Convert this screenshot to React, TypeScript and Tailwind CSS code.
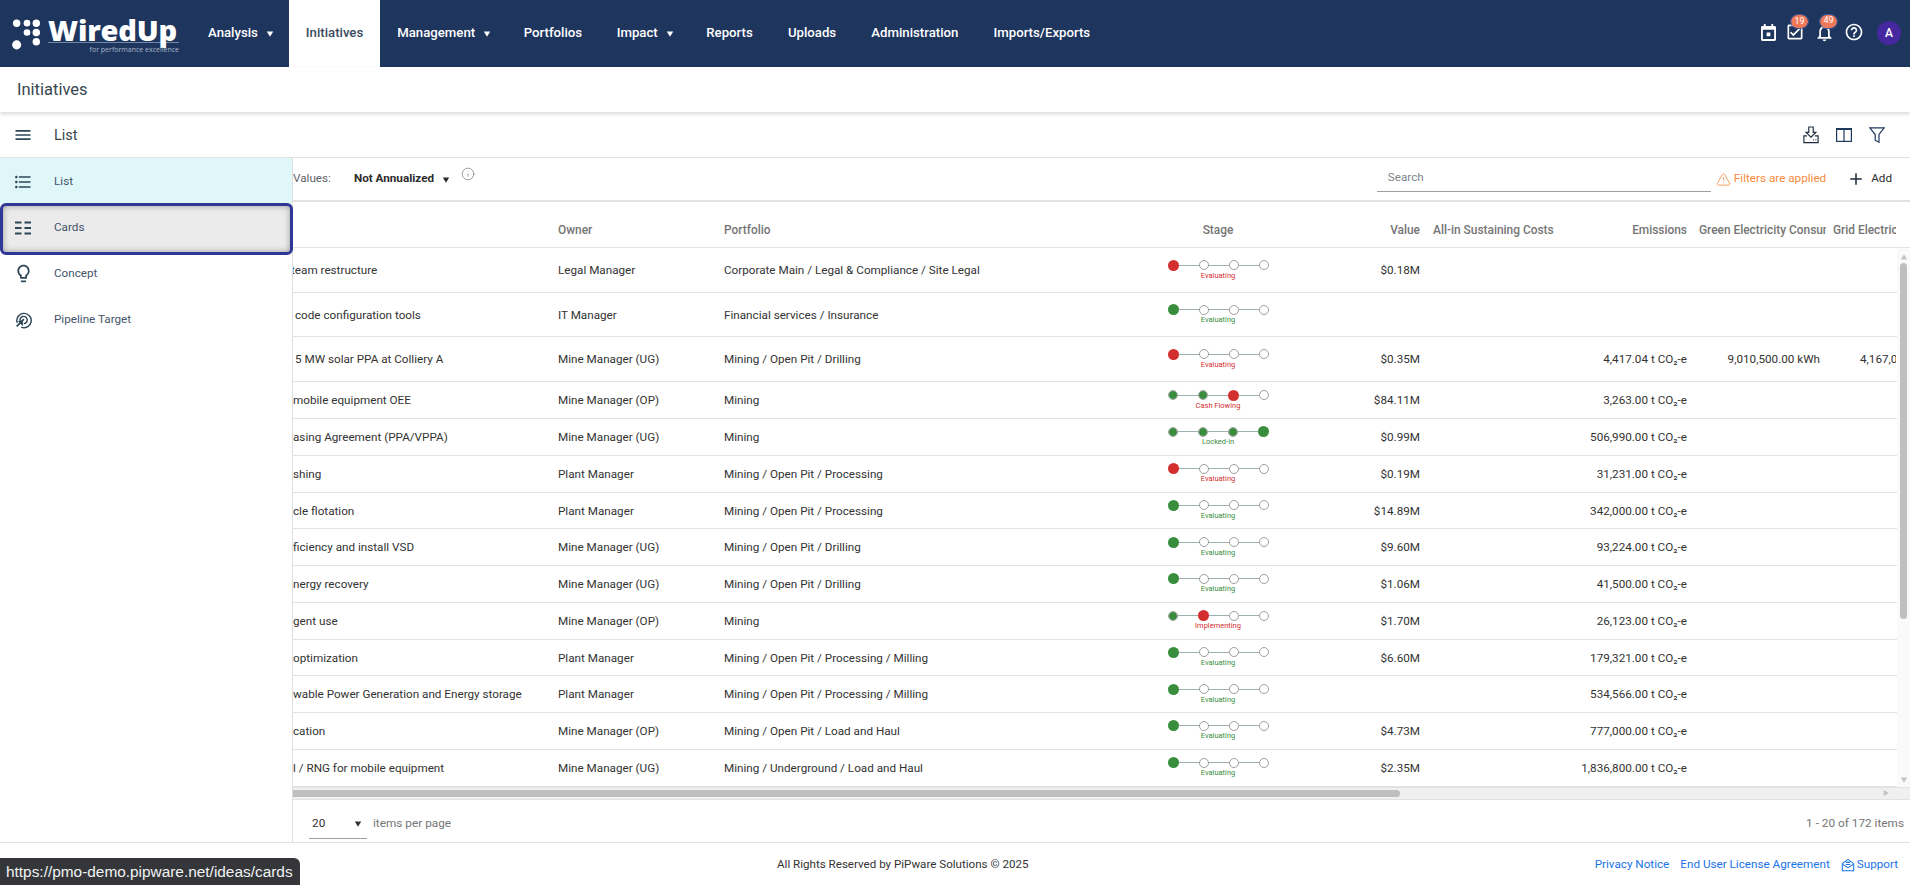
import {
  MdMenu,
  MdFormatListBulleted,
  MdOutlineLightbulb,
  MdOutlineNotifications,
  MdHelpOutline,
  MdOutlineAssignmentTurnedIn,
} from 'react-icons/md'
import { Info, Plus, TriangleAlert } from 'lucide-react'

type StepState = 'done' | 'red' | 'green' | 'empty'

type Row = {
  name: string
  nameClass: string
  owner: string
  portfolio: string
  steps: StepState[]
  stage: string
  value?: string
  emissions?: string
  green?: string
  grid?: string
  height: string
}

const drilling = 'Mining / Open Pit / Drilling'
const processing = 'Mining / Open Pit / Processing'
const milling = 'Mining / Open Pit / Processing / Milling'
const early: StepState[] = ['green', 'empty', 'empty', 'empty']
const earlyRed: StepState[] = ['red', 'empty', 'empty', 'empty']

const rows: Row[] = [
  { name: 'team restructure', nameClass: '-ml-[2px]', owner: 'Legal Manager', portfolio: 'Corporate Main / Legal & Compliance / Site Legal', steps: earlyRed, stage: 'Evaluating', value: '$0.18M', height: 'h-[45px]' },
  { name: 'code configuration tools', nameClass: 'ml-[2px]', owner: 'IT Manager', portfolio: 'Financial services / Insurance', steps: early, stage: 'Evaluating', height: 'h-[44px]' },
  { name: '5 MW solar PPA at Colliery A', nameClass: 'ml-[2px]', owner: 'Mine Manager (UG)', portfolio: drilling, steps: earlyRed, stage: 'Evaluating', value: '$0.35M', emissions: '4,417.04 t CO₂-e', green: '9,010,500.00 kWh', grid: '4,167,000.00 kWh', height: 'h-[45px]' },
  { name: 'mobile equipment OEE', nameClass: 'ml-0', owner: 'Mine Manager (OP)', portfolio: 'Mining', steps: ['done', 'done', 'red', 'empty'], stage: 'Cash Flowing', value: '$84.11M', emissions: '3,263.00 t CO₂-e', height: 'h-[37px]' },
  { name: 'asing Agreement (PPA/VPPA)', nameClass: 'ml-0', owner: 'Mine Manager (UG)', portfolio: 'Mining', steps: ['done', 'done', 'done', 'green'], stage: 'Locked-in', value: '$0.99M', emissions: '506,990.00 t CO₂-e', height: 'h-[36.75px]' },
  { name: 'shing', nameClass: 'ml-0', owner: 'Plant Manager', portfolio: processing, steps: earlyRed, stage: 'Evaluating', value: '$0.19M', emissions: '31,231.00 t CO₂-e', height: 'h-[36.75px]' },
  { name: 'cle flotation', nameClass: 'ml-0', owner: 'Plant Manager', portfolio: processing, steps: early, stage: 'Evaluating', value: '$14.89M', emissions: '342,000.00 t CO₂-e', height: 'h-[36.75px]' },
  { name: 'ficiency and install VSD', nameClass: 'ml-0', owner: 'Mine Manager (UG)', portfolio: drilling, steps: early, stage: 'Evaluating', value: '$9.60M', emissions: '93,224.00 t CO₂-e', height: 'h-[36.75px]' },
  { name: 'nergy recovery', nameClass: 'ml-0', owner: 'Mine Manager (UG)', portfolio: drilling, steps: early, stage: 'Evaluating', value: '$1.06M', emissions: '41,500.00 t CO₂-e', height: 'h-[36.75px]' },
  { name: 'gent use', nameClass: 'ml-0', owner: 'Mine Manager (OP)', portfolio: 'Mining', steps: ['done', 'red', 'empty', 'empty'], stage: 'Implementing', value: '$1.70M', emissions: '26,123.00 t CO₂-e', height: 'h-[36.75px]' },
  { name: 'optimization', nameClass: 'ml-0', owner: 'Plant Manager', portfolio: milling, steps: early, stage: 'Evaluating', value: '$6.60M', emissions: '179,321.00 t CO₂-e', height: 'h-[36.75px]' },
  { name: 'wable Power Generation and Energy storage', nameClass: 'ml-0', owner: 'Plant Manager', portfolio: milling, steps: early, stage: 'Evaluating', emissions: '534,566.00 t CO₂-e', height: 'h-[36.75px]' },
  { name: 'cation', nameClass: 'ml-0', owner: 'Mine Manager (OP)', portfolio: 'Mining / Open Pit / Load and Haul', steps: early, stage: 'Evaluating', value: '$4.73M', emissions: '777,000.00 t CO₂-e', height: 'h-[36.75px]' },
  { name: 'l / RNG for mobile equipment', nameClass: 'ml-0', owner: 'Mine Manager (UG)', portfolio: 'Mining / Underground / Load and Haul', steps: early, stage: 'Evaluating', value: '$2.35M', emissions: '1,836,800.00 t CO₂-e', height: 'h-[36.75px]' },
]

const navItems = [
  { label: 'Analysis', caret: true },
  { label: 'Initiatives', active: true },
  { label: 'Management', caret: true },
  { label: 'Portfolios' },
  { label: 'Impact', caret: true },
  { label: 'Reports' },
  { label: 'Uploads' },
  { label: 'Administration' },
  { label: 'Imports/Exports' },
]

const gridCols = 'grid grid-cols-[265px_166px_394px_200px_107px_155px_112px_134px_70px]'

function Caret({ className }: { className: string }) {
  return (
    <svg viewBox="0 0 10 10" className={className} fill="currentColor">
      <path d="M1 2h8L5 8.5z" />
    </svg>
  )
}

function Logo() {
  const dots = [
    [4, 5, 3.6], [14, 5, 3.2], [23, 5, 3.6],
    [14, 14, 3.2], [23, 14, 3.6],
    [23, 23, 3.6], [4, 26, 4.4],
  ]
  return (
    <div className="flex w-[191px] shrink-0 items-start pl-3 pt-[17px]">
      <svg width="30" height="32" viewBox="0 0 28 31" className="mt-[1px] shrink-0 fill-white">
        {dots.map(([cx, cy, r], i) => (
          <circle key={i} cx={cx} cy={cy} r={r} />
        ))}
      </svg>
      <div className="ml-[6px] w-[131px]">
        <div className="h-[25px] font-['Open_Sans',sans-serif] text-[29px] leading-[25px] font-extrabold tracking-[-0.2px] text-white">
          WiredUp
        </div>
        <div className="h-px bg-[#7288a8]" />
        <div className="mt-[2px] text-right font-['Open_Sans',sans-serif] text-[7px] leading-[10px] text-[#a9b5c8]">
          for performance excellence
        </div>
      </div>
    </div>
  )
}

function CalendarIcon() {
  return (
    <svg viewBox="0 0 16 18" className="mr-[9px] h-[17px] w-[15px] fill-white">
      <path d="M3 0h2v2h6V0h2v2h1.500C15.300 2 16 2.700 16 3.500v13c0 .8-.7 1.500-1.500 1.500h-13C.7 18 0 17.300 0 16.500v-13C0 2.700.7 2 1.500 2H3zM2 6v10h12V6z" />
      <rect x="6" y="9" width="4" height="4" />
    </svg>
  )
}

function TopNav() {
  return (
    <header className="flex h-[67px] shrink-0 items-stretch bg-[#1e355e] text-white">
      <Logo />
      <nav className="flex items-stretch text-[13.2px] font-medium">
        {navItems.map((item) => (
          <div
            key={item.label}
            className={
              item.active
                ? 'flex items-center bg-white px-[17px] pb-[1px] text-[#3a4a5c]'
                : item.caret
                  ? 'flex items-center pb-[1px] pl-[17px] pr-[15px]'
                  : 'flex items-center pb-[1px] px-[17.6px]'
            }
          >
            <span>{item.label}</span>
            {item.caret && <Caret className="ml-[8px] mt-[2px] h-[8px] w-[8px]" />}
          </div>
        ))}
      </nav>
      <div className="ml-auto flex items-center pb-[1px] pr-[9px]">
        <div className="mb-[2px] mr-[1px] flex items-center">
          <CalendarIcon />
          <span className="relative mr-[9px]">
            <MdOutlineAssignmentTurnedIn className="h-[20px] w-[20px]" />
            <Badge n="19" />
          </span>
          <span className="relative mr-[9px]">
            <MdOutlineNotifications className="h-[21px] w-[21px]" />
            <Badge n="49" />
          </span>
          <MdHelpOutline className="mr-[12px] h-[20px] w-[20px]" />
        </div>
        <div className="flex h-[24px] w-[24px] items-center justify-center rounded-full bg-[#4527a0] text-[12px] font-medium">
          A
        </div>
      </div>
    </header>
  )
}

function Badge({ n }: { n: string }) {
  return (
    <span className="absolute -top-[7px] left-[6px] flex h-[13px] w-[17px] items-center justify-center rounded-full bg-[#f0785a] text-[9px] text-white outline outline-1 outline-[#3f5a96]">
      {n}
    </span>
  )
}

function CardsIcon() {
  return (
    <svg viewBox="0 0 16 14" className="h-[14px] w-[16px] stroke-[#2f4858]" strokeWidth="1.800">
      <path d="M0 1.500h6.500M9.500 1.500H16M0 7h6.500M9.500 7H16M0 12.500h6.500M9.500 12.500H16" />
    </svg>
  )
}

function TargetIcon() {
  return (
    <svg viewBox="0 0 20 20" className="h-[18px] w-[18px] fill-none stroke-[#2f4858]" strokeWidth="1.600">
      <path d="M3.500 13A8 8 0 1 1 8 18" />
      <path d="M7 11.500A4 4 0 1 1 11 14" />
      <path d="M11 9 3 17" strokeWidth="2" />
      <path d="M5 11.500h4.500V16z" className="fill-[#2f4858]" strokeWidth="1" />
    </svg>
  )
}

function DownloadIcon() {
  return (
    <svg viewBox="0 0 18 20" className="h-[18px] w-[16px] fill-none stroke-[#1f2d3d]" strokeWidth="1.300">
      <path d="M6.500 1h5v6h3L9 12.500 3.500 7h3z" />
      <path d="M4.500 11H1v7.500h16V11h-3.500" />
      <path d="M11.500 15.500h1M14 15.500h1" />
    </svg>
  )
}

function ColumnsIcon() {
  return (
    <svg viewBox="0 0 16 14" className="h-[14px] w-[16px] fill-none stroke-[#1f3a5f]" strokeWidth="1.200">
      <rect x=".6" y="1" width="14.800" height="12.400" />
      <path d="M8 1v12.400" />
      <path d="M0 1h16" strokeWidth="2" />
    </svg>
  )
}

function FunnelIcon() {
  return (
    <svg viewBox="0 0 16 16" className="h-[16px] w-[16px] fill-none stroke-[#1f3a5f]" strokeWidth="1.200">
      <path d="M.8.800h14.400L10 7.500v7.700l-3.800-2V7.500z" />
    </svg>
  )
}

function SupportIcon() {
  return (
    <svg viewBox="0 0 16 16" className="mr-[2px] h-[14px] w-[14px] fill-none stroke-[#1a73e8]" strokeWidth="1.200">
      <path d="M1.500 6.500 8 1.500l6.500 5v8h-13z" />
      <path d="M1.500 7 8 11l6.500-4" />
      <path d="M5.500 5h5M5.500 7.500h5" />
    </svg>
  )
}

function Sidebar() {
  const items = [
    { label: 'List', icon: <MdFormatListBulleted className="h-[20px] w-[20px] text-[#2f4858]" />, cls: 'h-[46px] bg-[#e0f7fa]' },
    { label: 'Cards', icon: <CardsIcon />, cls: 'z-10 h-[46px]', focus: true },
    { label: 'Concept', icon: <MdOutlineLightbulb className="h-[21px] w-[21px] text-[#2f4858]" />, cls: 'h-[46px]' },
    { label: 'Pipeline Target', icon: <TargetIcon />, cls: 'h-[46px]' },
  ]
  return (
    <aside className="flex w-[293px] shrink-0 flex-col border-r border-[#dedede] bg-white">
      {items.map((item) => (
        <div key={item.label} className={`relative flex items-center pt-[1px] ${item.cls}`}>
          {item.focus && (
            <span className="absolute -top-[1px] -right-[1px] -bottom-[5px] left-0 -z-10 rounded-[6px] border-[3px] border-[#303796] bg-[#ebebeb] shadow-[inset_0_0_6px_rgba(0,0,0,0.35)]" />
          )}
          <span className="flex w-[46px] justify-center">{item.icon}</span>
          <span className="ml-[8px] text-[11.7px] text-[#44546a]">{item.label}</span>
        </div>
      ))}
    </aside>
  )
}

function Toolbar() {
  return (
    <div className="flex h-[44px] shrink-0 items-center border-b-2 border-[#e2e2e2] pr-[18px] text-[11.7px]">
      <span className="text-[#5f6368]">Values:</span>
      <span className="ml-[23px] font-bold text-[#2c2c2c]">Not Annualized</span>
      <Caret className="ml-[8px] mt-[1px] h-[8px] w-[8px] text-[#2c2c2c]" />
      <Info className="mb-[11px] ml-[11px] h-[14px] w-[14px] text-[#757575]" strokeWidth={1.2} />
      <div className="mb-[5px] ml-auto mr-[5px] flex h-[30px] w-[334px] items-center border-b border-[#9e9e9e] pt-[4px] pl-[11px] text-[#80868b]">
        Search
      </div>
      <TriangleAlert className="mr-[3px] h-[15px] w-[15px] text-[#f68a3c]" strokeWidth={1.3} />
      <span className="text-[#f68a3c]">Filters are applied</span>
      <Plus className="ml-[21px] h-[18px] w-[18px] text-[#1f2d3d]" strokeWidth={2} />
      <span className="ml-[6px] text-[#2c2c2c]">Add</span>
    </div>
  )
}

function HeaderRow() {
  return (
    <div className={`${gridCols} h-[46px] shrink-0 items-center border-b border-[#e2e2e2] pt-[12px] text-[11.9px] font-medium whitespace-nowrap text-[#757575]`}>
      <span />
      <span>Owner</span>
      <span>Portfolio</span>
      <span className="text-center">Stage</span>
      <span className="pr-[5px] text-right">Value</span>
      <span className="pl-[8px]">All-in Sustaining Costs</span>
      <span className="pr-[5px] text-right">Emissions</span>
      <span className="overflow-hidden pl-[7px]">Green Electricity Consumption</span>
      <span className="overflow-hidden pl-[7px]">Grid Electricity</span>
    </div>
  )
}

function Stage({ steps, label }: { steps: StepState[]; label: string }) {
  const hasRed = steps.includes('red')
  return (
    <div className="mb-[2px] flex flex-col items-center">
      <div className="flex items-center">
        {steps.map((s, i) => (
          <div key={i} className="flex items-center">
            {i > 0 && <div className="h-px w-[20px] bg-[#9fb0b0]" />}
            {s === 'empty' && <div className="h-[10px] w-[10px] rounded-full border border-[#9e9e9e] bg-white" />}
            {s === 'done' && <div className="mx-[1px] h-[8px] w-[8px] rounded-full bg-[#388e3c] outline outline-1 outline-[#9e9e9e]" />}
            {s === 'red' && <div className="h-[11px] w-[11px] rounded-full bg-[#d32f2f]" />}
            {s === 'green' && <div className="h-[11px] w-[11px] rounded-full bg-[#388e3c]" />}
          </div>
        ))}
      </div>
      <span className={`text-[7.5px] leading-[10px] ${hasRed ? 'text-[#d32f2f]' : 'text-[#388e3c]'}`}>{label}</span>
    </div>
  )
}

function TableRow({ row }: { row: Row }) {
  return (
    <div className={`${gridCols} ${row.height} items-center border-b border-[#e2e2e2] pt-[2px] text-[11.7px] whitespace-nowrap text-[#333333]`}>
      <span className="overflow-hidden">
        <span className={`block ${row.nameClass}`}>{row.name}</span>
      </span>
      <span>{row.owner}</span>
      <span>{row.portfolio}</span>
      <Stage steps={row.steps} label={row.stage} />
      <span className="pr-[5px] text-right">{row.value}</span>
      <span />
      <span className="pr-[5px] text-right">{row.emissions}</span>
      <span className="pr-[6px] text-right">{row.green}</span>
      <span className="overflow-hidden pl-[34px]">{row.grid}</span>
    </div>
  )
}

function VerticalScrollbar() {
  return (
    <div className="flex w-[13px] shrink-0 flex-col items-center bg-[#fafafa]">
      <Caret className="mt-[5px] h-[8px] w-[8px] rotate-180 text-[#c4c4c4]" />
      <div className="mt-[2px] h-[356px] w-[7px] rounded-full bg-[#bfbfbf]" />
      <Caret className="mt-auto mb-[3px] h-[8px] w-[8px] text-[#c4c4c4]" />
    </div>
  )
}

function Table() {
  return (
    <div className="flex min-h-0 flex-1 flex-col overflow-hidden">
      <HeaderRow />
      <div className="flex h-[538.5px] shrink-0">
        <div className="min-w-0 flex-1 overflow-hidden">
          {rows.map((row) => (
            <TableRow key={row.name} row={row} />
          ))}
        </div>
        <VerticalScrollbar />
      </div>
      <div className="flex h-[13px] shrink-0 items-center border-y border-[#e2e2e2] bg-[#f0f0f0]">
        <div className="h-[7px] w-[1107px] rounded-r-full bg-[#bfbfbf]" />
        <Caret className="ml-auto mr-[20px] h-[8px] w-[8px] -rotate-90 text-[#c4c4c4]" />
      </div>
    </div>
  )
}

function Pager() {
  return (
    <div className="flex h-[42px] shrink-0 items-center pt-[6px] pr-[6px] pl-[16px] text-[11.8px] text-[#757575]">
      <div className="flex h-[30px] w-[58px] items-center justify-between border-b border-[#9e9e9e] pr-[5px] pl-[3px] text-[#333333]">
        <span>20</span>
        <Caret className="h-[8px] w-[8px]" />
      </div>
      <span className="ml-[6px]">items per page</span>
      <span className="ml-auto">1 - 20 of 172 items</span>
    </div>
  )
}

function Footer() {
  return (
    <footer className="flex h-[43px] shrink-0 items-center border-t border-[#e2e2e2] pt-[2px] pr-[12px] pl-[777px] text-[11.6px] text-[#333333]">
      <span>All Rights Reserved by PiPware Solutions © 2025</span>
      <div className="ml-auto flex items-center text-[11.7px] text-[#1a73e8]">
        <span>Privacy Notice</span>
        <span className="ml-[11px]">End User License Agreement</span>
        <span className="ml-[11px] flex items-center">
          <SupportIcon />
          Support
        </span>
      </div>
    </footer>
  )
}

export default function App() {
  return (
    <div className="relative flex h-[885px] w-[1910px] flex-col overflow-hidden bg-white font-['Roboto',sans-serif]">
      <TopNav />
      <div className="z-10 flex h-[45px] shrink-0 items-center bg-white pt-[2px] pl-[17px] text-[16.500px] text-[#37474f] shadow-[0_2px_4px_rgba(0,0,0,0.16)]">
        Initiatives
      </div>
      <div className="flex h-[46px] shrink-0 items-center border-b border-[#e2e2e2] pr-[25px]">
        <MdMenu className="ml-[13px] h-[20px] w-[20px] text-[#2f4858]" />
        <span className="ml-[21px] pt-[2px] text-[14.500px] text-[#37474f]">List</span>
        <div className="ml-auto flex items-center gap-[17px]">
          <DownloadIcon />
          <ColumnsIcon />
          <FunnelIcon />
        </div>
      </div>
      <div className="flex min-h-0 flex-1">
        <Sidebar />
        <div className="flex min-w-0 flex-1 flex-col">
          <Toolbar />
          <Table />
          <Pager />
        </div>
      </div>
      <Footer />
      <div className="absolute bottom-0 left-0 flex h-[27px] w-[300px] items-center rounded-tr-[6px] bg-[#35363a] pl-[6px] font-['Liberation_Sans',sans-serif] text-[15.400px] text-[#f1f3f4]">
        https://pmo-demo.pipware.net/ideas/cards
      </div>
    </div>
  )
}
